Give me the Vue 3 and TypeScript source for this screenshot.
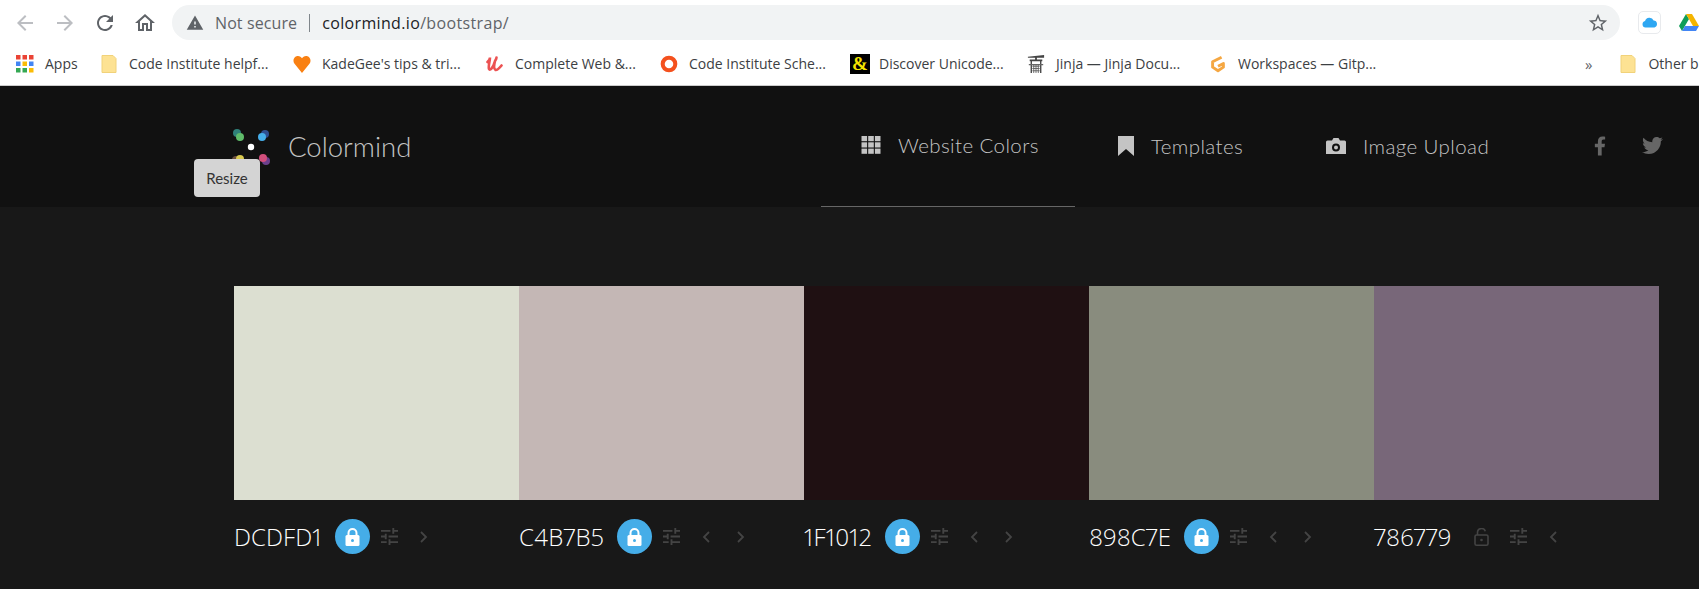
<script setup lang="ts">
interface Bookmark {
  label: string
  kind: string
  width: number
}

interface Swatch {
  hex: string
  locked: boolean
  prev: boolean
  next: boolean
}

const bookmarks: Bookmark[] = [
  { label: 'Apps', kind: 'apps', width: 33 },
  { label: 'Code Institute helpf...', kind: 'folder', width: 142 },
  { label: "KadeGee's tips & tri...", kind: 'heart', width: 142 },
  { label: 'Complete Web &...', kind: 'udemy', width: 123 },
  { label: 'Code Institute Sche...', kind: 'ring', width: 139 },
  { label: 'Discover Unicode...', kind: 'amp', width: 126 },
  { label: 'Jinja — Jinja Docu...', kind: 'torii', width: 131 },
  { label: 'Workspaces — Gitp...', kind: 'gitpod', width: 142 },
]

const swatches: Swatch[] = [
  { hex: 'DCDFD1', locked: true, prev: false, next: true },
  { hex: 'C4B7B5', locked: true, prev: true, next: true },
  { hex: '1F1012', locked: true, prev: true, next: true },
  { hex: '898C7E', locked: true, prev: true, next: true },
  { hex: '786779', locked: false, prev: true, next: false },
]

const appDots = ['#ea4335', '#ea4335', '#ea4335', '#4285f4', '#fbbc05', '#4285f4', '#34a853', '#34a853', '#fbbc05']
</script>

<template>
  <div class="page">
    <div class="toolbar">
      <svg class="nav-btn faded" viewBox="0 0 24 24"><path d="M20 11H7.83l5.59-5.59L12 4l-8 8 8 8 1.41-1.41L7.83 13H20v-2z" /></svg>
      <svg class="nav-btn faded" viewBox="0 0 24 24"><path d="M4 11h12.17l-5.59-5.59L12 4l8 8-8 8-1.41-1.41L16.17 13H4v-2z" /></svg>
      <svg class="nav-btn" viewBox="0 0 24 24"><path d="M17.65 6.35C16.2 4.9 14.21 4 12 4c-4.42 0-7.99 3.58-7.99 8s3.57 8 7.99 8c3.73 0 6.84-2.55 7.73-6h-2.08c-.82 2.33-3.04 4-5.65 4-3.31 0-6-2.69-6-6s2.69-6 6-6c1.66 0 3.14.69 4.22 1.78L13 11h7V4l-2.35 2.35z" /></svg>
      <svg class="nav-btn" viewBox="0 0 24 24"><path d="M12 5.69l5 4.5V18h-2v-6H9v6H7v-7.81l5-4.5M12 3L2 12h3v8h6v-6h2v6h6v-8h3L12 3z" /></svg>
      <div class="omnibox">
        <svg class="warn" viewBox="0 0 24 24"><path d="M1 21h22L12 2 1 21zm12-3h-2v-2h2v2zm0-4h-2v-4h2v4z" /></svg>
        <span class="not-secure">Not secure</span>
        <span class="omni-sep"></span>
        <span class="url">colormind.io<span class="url-path">/bootstrap/</span></span>
        <svg class="star" viewBox="0 0 24 24"><path d="M22 9.24l-7.19-.62L12 2 9.19 8.63 2 9.24l5.46 4.73L5.82 21 12 17.27 18.18 21l-1.63-7.03L22 9.24zM12 15.4l-3.76 2.27 1-4.28-3.32-2.88 4.38-.38L12 6.1l1.71 4.04 4.38.38-3.32 2.88 1 4.28L12 15.4z" /></svg>
      </div>
      <div class="ext-cloud">
        <svg viewBox="0 0 20 20" width="18" height="18"><path fill="#2ea7f2" d="M5 15a3.6 3.6 0 0 1-.5-7.1A5 5 0 0 1 14 7.2 4 4 0 0 1 15 15z" /></svg>
      </div>
      <svg class="ext-drive" viewBox="0 0 20 18">
        <path fill="#0f9d58" d="M7 0 0 12l3 5 7-12z" />
        <path fill="#f4b400" d="M7 0h6l7 12h-6z" />
        <path fill="#4285f4" d="M3 17h14l3-5H6z" />
      </svg>
    </div>

    <div class="bookmarks">
      <div v-for="b in bookmarks" :key="b.label" class="bookmark">
        <svg v-if="b.kind === 'apps'" class="bm-icon" viewBox="0 0 18 18">
          <rect v-for="(c, i) in appDots" :key="i" :x="(i % 3) * 6.5" :y="Math.floor(i / 3) * 6.5" width="4.5" height="4.5" :fill="c" />
        </svg>
        <svg v-else-if="b.kind === 'folder'" class="bm-icon" viewBox="0 0 18 18">
          <path fill="#fde293" stroke="#f1d27a" d="M2 .5h11l3 3v14H2z" />
        </svg>
        <svg v-else-if="b.kind === 'heart'" class="bm-icon" viewBox="0 0 20 20">
          <path fill="#f98012" d="M10 20 1.5 9.5C-.8 6 1.2 1 5.5 1 7.6 1 9.2 2.2 10 3.6 10.8 2.2 12.4 1 14.5 1c4.300 0 6.300 5 4 8.500z" />
        </svg>
        <svg v-else-if="b.kind === 'udemy'" class="bm-icon" viewBox="0 0 18 18">
          <path fill="none" stroke="#ec5252" stroke-width="2.600" stroke-linecap="round" d="M1.500 7c2-2 2.500-3 2.500-4.500C4 6 2 11 3 14c1 2 4-1 6-8-1 4-1.500 8 .5 9 2 .5 4-2 6-4.500M9 6c1-1.500 1.500-2.500 1.500-3.500" />
        </svg>
        <svg v-else-if="b.kind === 'ring'" class="bm-icon" viewBox="0 0 20 20">
          <circle cx="10" cy="10" r="7" fill="none" stroke="#f4511e" stroke-width="4.500" />
        </svg>
        <span v-else-if="b.kind === 'amp'" class="amp-icon">&amp;</span>
        <svg v-else-if="b.kind === 'torii'" class="bm-icon" viewBox="0 0 18 20">
          <path fill="#444" d="M0 2 18 0v3H0zM2 5h14v2H2zM3 7h1.500v13H3zM13.500 7H15v13h-1.500zM8 3h2v4H8z" />
          <path fill="#666" d="M1 10h16v1.500H1zM5 12h8v1H5zM5 14.500h8v1H5zM5 17h8v1H5zM6 11h1v9H6zM8.500 11h1v9h-1zM11 11h1v9h-1z" />
        </svg>
        <svg v-else-if="b.kind === 'gitpod'" class="bm-icon" viewBox="0 0 18 20">
          <path fill="none" stroke="#f5a742" stroke-width="3.200" stroke-linejoin="round" d="M13 2.500 3 7.500v6l6 4 6-4V9.500L9 12.500" />
        </svg>
        <span class="bm-label" :style="{ width: b.width + 'px' }">{{ b.label }}</span>
      </div>
      <span class="overflow-btn">»</span>
      <span class="bm-sep"></span>
      <div class="other">
        <svg class="bm-icon" viewBox="0 0 18 18"><path fill="#fde293" stroke="#f1d27a" d="M2 .5h11l3 3v14H2z" /></svg>
        <span class="bm-label">Other bookmarks</span>
      </div>
    </div>

    <header class="site-header">
      <div class="brand">
        <svg class="logo" viewBox="0 0 40 40">
          <circle cx="5" cy="6" r="4" fill="#2f8079" />
          <circle cx="8" cy="10" r="4" fill="#5fbb6a" />
          <circle cx="33" cy="7" r="4" fill="#2f4f92" />
          <circle cx="30" cy="10" r="4" fill="#46aeea" />
          <circle cx="4" cy="33" r="4" fill="#6b5040" />
          <circle cx="8" cy="32" r="4" fill="#d8c94f" />
          <circle cx="34" cy="34" r="4" fill="#6c3f8c" />
          <circle cx="31" cy="31" r="4" fill="#d24f7c" />
          <circle cx="19" cy="20" r="3.200" fill="#fff" />
        </svg>
        <span class="brand-name">Colormind</span>
      </div>
      <nav class="site-nav">
        <a class="nav-item active">
          <svg class="nav-icon" viewBox="0 0 19 18">
            <template v-for="r in 3" :key="r">
              <rect v-for="c in 3" :key="c" :x="(c - 1) * 6.700" :y="(r - 1) * 6.300" width="5.600" height="5.200" />
            </template>
          </svg>
          <span>Website Colors</span>
        </a>
        <a class="nav-item templates">
          <svg class="nav-icon bookmark-icon" viewBox="0 0 16 20"><path d="M0 0h16v20l-8-7-8 7z" /></svg>
          <span>Templates</span>
        </a>
        <a class="nav-item upload">
          <svg class="nav-icon" viewBox="0 0 20 16">
            <path fill-rule="evenodd" d="M6 2.500 7.500 0h5L14 2.500h4.500A1.500 1.500 0 0 1 20 4v12H0V4a1.500 1.500 0 0 1 1.500-1.500zM10 5.500a4 4 0 1 0 0 8 4 4 0 0 0 0-8zm0 2a2 2 0 1 1 0 4 2 2 0 0 1 0-4z" />
          </svg>
          <span>Image Upload</span>
        </a>
      </nav>
      <div class="socials">
        <svg class="fb" viewBox="0 0 320 512"><path d="M279.14 288l14.22-92.66h-88.91v-60.13c0-25.35 12.42-50.06 52.24-50.06h40.42V6.26S260.43 0 225.36 0c-73.22 0-121.08 44.38-121.08 124.72v70.62H22.89V288h81.39v224h100.17V288z" /></svg>
        <svg class="tw" viewBox="0 0 512 512"><path d="M459.37 151.716c.325 4.548.325 9.097.325 13.645 0 138.72-105.583 298.558-298.558 298.558-59.452 0-114.68-17.219-161.137-47.106 8.447.974 16.568 1.299 25.34 1.299 49.055 0 94.213-16.568 130.274-44.832-46.132-.975-84.792-31.188-98.112-72.772 6.498.974 12.995 1.624 19.818 1.624 9.421 0 18.843-1.3 27.614-3.573-48.081-9.747-84.143-51.98-84.143-102.985v-1.299c13.969 7.797 30.214 12.67 47.431 13.319-28.264-18.843-46.781-51.005-46.781-87.391 0-19.492 5.197-37.36 14.294-52.954 51.655 63.675 129.3 105.258 216.365 109.807-1.624-7.797-2.599-15.918-2.599-24.04 0-57.828 46.782-104.934 104.934-104.934 30.213 0 57.502 12.67 76.67 33.137 23.715-4.548 46.456-13.32 66.599-25.34-7.798 24.366-24.366 44.833-46.132 57.827 21.117-2.273 41.584-8.122 60.426-16.243-14.292 20.791-32.161 39.308-52.628 54.253z" /></svg>
      </div>
      <div class="tooltip">Resize</div>
    </header>

    <main class="palette">
      <section v-for="s in swatches" :key="s.hex" class="swatch">
        <div class="swatch-color" :style="{ background: '#' + s.hex }"></div>
        <div class="swatch-row">
          <span class="swatch-hex">{{ s.hex }}</span>
          <span class="lock" :class="{ locked: s.locked }">
            <svg v-if="s.locked" viewBox="0 0 15 18" width="15" height="18">
              <path fill="none" stroke="#fff" stroke-width="2" d="M3.500 8V5a4 4 0 0 1 8 0v3" />
              <rect x="0.500" y="7" width="14" height="11" rx="1.500" fill="#fff" />
              <circle cx="7.500" cy="12.500" r="1.500" fill="#45ade8" />
            </svg>
            <svg v-else viewBox="0 0 15 18" width="15" height="18">
              <path fill="none" stroke="#444" stroke-width="1.600" d="M3.500 7V4.500a4 4 0 0 1 7.800-1.200" />
              <rect x="1" y="7" width="13" height="10.200" rx="1.500" fill="none" stroke="#444" stroke-width="1.600" />
              <circle cx="7.500" cy="12" r="1.300" fill="#444" />
            </svg>
          </span>
          <svg class="tune" viewBox="3 3 18 18"><path d="M3 17v2h6v-2H3zM3 5v2h10V5H3zm10 16v-2h8v-2h-8v-2h-2v6h2zM7 9v2H3v2h4v2h2V9H7zm14 4v-2H11v2h10zm-6-4h2V7h4V5h-4V3h-2v6z" /></svg>
          <svg v-if="s.prev" class="chevron" viewBox="0 0 8 12"><path d="M7 1 2 6l5 5" /></svg>
          <svg v-if="s.next" class="chevron" :class="{ second: s.prev }" viewBox="0 0 8 12"><path d="M1 1l5 5-5 5" /></svg>
        </div>
      </section>
    </main>
  </div>
</template>

<style>
html,
body {
  margin: 0;
  background: #181818;
  overflow: hidden;
}
</style>

<style scoped>
.page {
  width: 1699px;
  height: 589px;
  overflow: hidden;
  background: #181818;
  font-family: "Open Sans", "Liberation Sans", sans-serif;
}

.toolbar {
  display: flex;
  align-items: center;
  height: 45px;
  box-sizing: border-box;
  padding: 0 0 0 13px;
  background: #fff;
}

.nav-btn {
  width: 24px;
  height: 24px;
  margin-right: 16px;
  flex: none;
  fill: #5f6368;
}

.nav-btn.faded {
  fill: #bcbec2;
}

.omnibox {
  display: flex;
  align-items: center;
  width: 1450px;
  height: 35px;
  box-sizing: border-box;
  margin-left: -1px;
  padding: 0 11px 0 14px;
  border-radius: 18px;
  background: #f1f3f4;
  font-size: 16px;
}

.warn {
  width: 18px;
  height: 18px;
  fill: #5f6368;
  margin-right: 11px;
}

.not-secure {
  color: #5f6368;
  letter-spacing: 0.1px;
}

.omni-sep {
  width: 1px;
  height: 18px;
  margin: 0 12px;
  background: #80868b;
}

.url {
  color: #202124;
  letter-spacing: 0.35px;
}

.url-path {
  color: #5f6368;
}

.star {
  width: 22px;
  height: 22px;
  margin-left: auto;
  fill: #5f6368;
}

.ext-cloud {
  display: flex;
  align-items: center;
  justify-content: center;
  width: 21px;
  height: 21px;
  margin-left: 18px;
  border: 1px solid #e8eaed;
  border-radius: 5px;
}

.ext-drive {
  width: 20px;
  height: 18px;
  margin-left: 18px;
  flex: none;
}

.bookmarks {
  display: flex;
  align-items: center;
  height: 41px;
  box-sizing: border-box;
  padding: 0 0 3px 16px;
  background: #fff;
  border-bottom: 1px solid #ccc;
  font-size: 14px;
  color: #3c4043;
}

.bookmark {
  display: flex;
  align-items: center;
  gap: 11px;
  margin-right: 22px;
  flex: none;
}

.bm-icon {
  width: 18px;
  height: 18px;
  flex: none;
}

.bm-label {
  white-space: nowrap;
}

.amp-icon {
  display: flex;
  align-items: center;
  justify-content: center;
  width: 20px;
  height: 20px;
  margin-right: -2px;
  background: #000;
  color: #f5e400;
  font-family: "Liberation Serif", serif;
  font-size: 19px;
  font-weight: 700;
}

.overflow-btn {
  margin-left: 183px;
  font-size: 15px;
  color: #5f6368;
}

.bm-sep {
  width: 1px;
  height: 20px;
  margin: 0 15px 0 12px;
  background: #cfd1d5;
}

.other {
  display: flex;
  align-items: center;
  gap: 11px;
  flex: none;
}

.site-header {
  position: relative;
  display: flex;
  align-items: stretch;
  height: 121px;
  background: #111;
}

.brand {
  display: flex;
  align-items: center;
  gap: 16px;
  width: 821px;
  box-sizing: border-box;
  padding-left: 232px;
  flex: none;
}

.logo {
  width: 40px;
  height: 40px;
  flex: none;
}

.brand-name {
  font-family: Lato, sans-serif;
  font-weight: 300;
  font-size: 27.5px;
  color: #c4c4c4;
}

.site-nav {
  display: flex;
  align-items: stretch;
  flex: none;
}

.nav-item {
  display: flex;
  align-items: center;
  gap: 17px;
  box-sizing: border-box;
  padding: 0 0 2px 40px;
  color: #c4c4c4;
  font-family: Lato, sans-serif;
  font-size: 20.5px;
  font-weight: 300;
  letter-spacing: 0.4px;
  white-space: nowrap;
}

.nav-item.active {
  width: 254px;
  border-bottom: 1px solid #666;
}

.nav-item.templates {
  width: 211px;
  padding-left: 43px;
}

.nav-item.upload {
  width: 246px;
}

.nav-icon {
  width: 20px;
  height: 18px;
  fill: #c4c4c4;
  flex: none;
}

.bookmark-icon {
  width: 16px;
  height: 20px;
}

.socials {
  display: flex;
  align-items: center;
  gap: 36px;
  margin-left: 62px;
  padding-bottom: 2px;
}

.fb {
  width: 12px;
  height: 20px;
  fill: #666;
}

.tw {
  width: 21px;
  height: 21px;
  fill: #666;
}

.tooltip {
  position: absolute;
  left: 194px;
  top: 73px;
  width: 66px;
  height: 38px;
  border-radius: 4px;
  background: #d4d4d4;
  color: #333;
  font-family: Lato, sans-serif;
  font-size: 15px;
  line-height: 38px;
  text-align: center;
}

.palette {
  display: grid;
  grid-template-columns: repeat(5, 285px);
  padding: 79px 0 0 234px;
}

.swatch-color {
  height: 214px;
}

.swatch-row {
  display: flex;
  align-items: center;
  height: 35px;
  margin-top: 19px;
}

.swatch-hex {
  color: #fff;
  font-size: 24px;
  font-weight: 300;
  font-variant-numeric: proportional-nums;
  letter-spacing: 0.1px;
}

.lock {
  display: flex;
  align-items: center;
  justify-content: center;
  width: 35px;
  height: 35px;
  margin-left: 13px;
  border-radius: 50%;
  flex: none;
}

.lock.locked {
  background: #45ade8;
}

.tune {
  width: 17px;
  height: 17px;
  margin-left: 11px;
  fill: #444;
  flex: none;
}

.chevron {
  width: 8px;
  height: 12px;
  margin-left: 22px;
  fill: none;
  stroke: #444;
  stroke-width: 1.800;
  flex: none;
}

.chevron.second {
  margin-left: 27px;
}
</style>
